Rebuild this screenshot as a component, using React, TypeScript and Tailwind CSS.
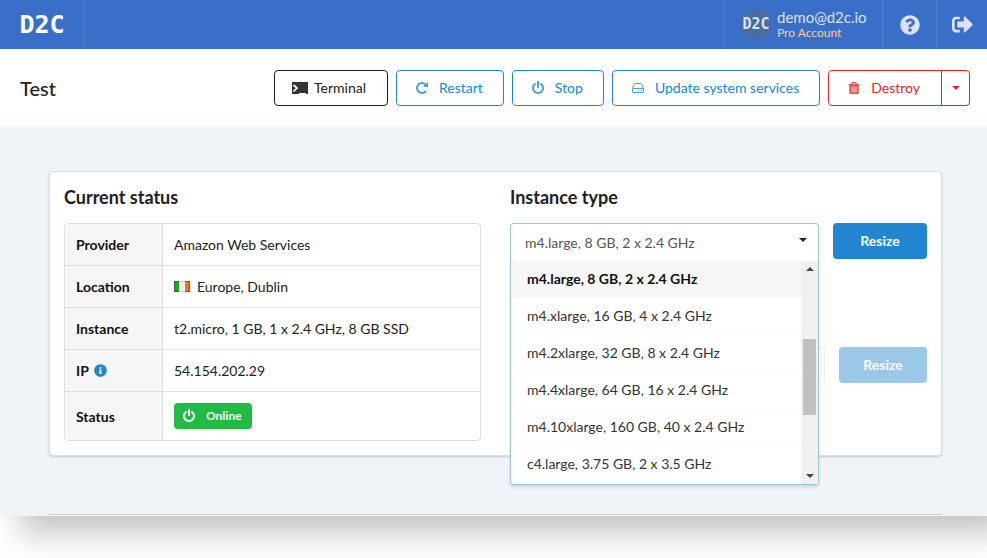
import { useState } from 'react';
import type { ReactNode } from 'react';
import { FaInfoCircle, FaQuestionCircle, FaSignOutAlt } from 'react-icons/fa';

const INSTANCE_TYPES = [
  'm4.large, 8 GB, 2 x 2.4 GHz',
  'm4.xlarge, 16 GB, 4 x 2.4 GHz',
  'm4.2xlarge, 32 GB, 8 x 2.4 GHz',
  'm4.4xlarge, 64 GB, 16 x 2.4 GHz',
  'm4.10xlarge, 160 GB, 40 x 2.4 GHz',
  'c4.large, 3.75 GB, 2 x 3.5 GHz',
];

function TerminalIcon() {
  return (
    <svg viewBox="0 0 16 12" className="h-3 w-4" aria-hidden="true">
      <path d="M0 0H16V12H14V11H7V12H0Z" fill="#333" />
      <path d="M1.5 3L5 6L1.5 9.500" fill="none" stroke="#fff" strokeWidth="1.7" />
    </svg>
  );
}

function RepeatIcon() {
  return (
    <svg viewBox="0 0 1792 1792" className="size-3.5" fill="currentColor" aria-hidden="true">
      <path d="M1664 256v448q0 26-19 45t-45 19h-448q-42 0-59-40-17-39 14-69l138-138q-148-137-349-137-104 0-198.500 40.500t-163.500 109.500-109.500 163.500-40.500 198.500 40.500 198.500 109.500 163.500 163.500 109.500 198.500 40.500q119 0 225-52t179-147q7-10 23-12 15 0 25 9l137 138q9 8 9.500 20.500t-7.500 22.500q-109 132-264 204.500t-327 72.500q-156 0-298-61t-245-164-164-245-61-298 61-298 164-245 245-164 298-61q147 0 284.500 55.500t244.500 156.500l130-129q29-31 70-14 39 17 39 59z" />
    </svg>
  );
}

function PowerIcon() {
  return (
    <svg viewBox="0 0 1792 1792" className="size-3.5" fill="currentColor" aria-hidden="true">
      <path d="M1664 896q0 156-61 298t-164 245-245 164-298 61-298-61-245-164-164-245-61-298q0-182 80.500-343t226.500-270q43-32 95.500-25t83.500 50q32 42 24.500 94.500t-49.500 84.500q-98 74-151.500 181t-53.500 228q0 104 40.500 198.500t109.500 163.500 163.500 109.500 198.500 40.500 198.500-40.500 163.500-109.500 109.500-163.500 40.500-198.500q0-121-53.500-228t-151.500-181q-42-32-49.500-84.500t24.500-94.500q31-43 84-50t95 25q146 109 226.500 270t80.500 343zm-640-768v640q0 52-38 90t-90 38-90-38-38-90v-640q0-52 38-90t90-38 90 38 38 90z" />
    </svg>
  );
}

function DriveIcon() {
  return (
    <svg viewBox="0 0 14 14" className="size-3.5" fill="none" stroke="currentColor" aria-hidden="true">
      <path d="M1.500 7.500L3.200 3.200Q3.500 2.500 4.200 2.500H9.800Q10.500 2.500 10.800 3.200L12.500 7.500V11Q12.500 11.500 12 11.500H2Q1.500 11.500 1.500 11Z M1.500 7.500H12.500" />
      <path d="M7.500 9.500H8.500M9.800 9.500H10.800" />
    </svg>
  );
}

function TrashIcon() {
  return (
    <svg viewBox="0 0 14 14" className="size-3.5" fill="none" stroke="currentColor" aria-hidden="true">
      <path d="M1.500 3.500H12.500M4.800 3.500L5.300 1.500H8.700L9.200 3.500" strokeWidth="1.200" />
      <path d="M2.300 4H11.700V12Q11.700 13 10.700 13H3.300Q2.300 13 2.300 12Z" fill="currentColor" stroke="none" />
      <path d="M5 5.500V11.500M7 5.500V11.500M9 5.500V11.500" stroke="#fff" strokeWidth="0.800" />
    </svg>
  );
}

function Caret({ up = false }: { up?: boolean }) {
  return (
    <svg viewBox="0 0 8 4" className="h-1 w-2" fill="currentColor" aria-hidden="true">
      <path d={up ? 'M0 4L4 0L8 4Z' : 'M0 0H8L4 4Z'} />
    </svg>
  );
}

function IrishFlag() {
  return (
    <svg viewBox="0 0 16 11" className="h-[11px] w-4" role="img" aria-label="Ireland">
      <rect width="16" height="11" fill="#efefef" />
      <rect width="5" height="11" fill="#2f9e2f" />
      <rect x="11" width="5" height="11" fill="#ff7316" />
      <path d="M0.500 0V10.500H5" fill="none" stroke="#12781a" />
      <path d="M0 0.500H5" stroke="#12781a" />
      <path d="M11 0.500H15.500V10.500H11" fill="none" stroke="#d43a08" />
      <path d="M5 0.500H11M5 10.500H11" stroke="#d4d4d4" />
    </svg>
  );
}

function ActionButton({ icon, children }: { icon: ReactNode; children: ReactNode }) {
  return (
    <button
      type="button"
      className="flex h-9 items-center rounded border border-[#2185d0] pr-5 pl-[18px] text-[#2185d0]"
    >
      <span className="mr-2.5 opacity-80">{icon}</span>
      {children}
    </button>
  );
}

function Row({ label, children }: { label: ReactNode; children: ReactNode }) {
  return (
    <tr>
      <th
        scope="row"
        className="w-[98px] border-r border-b border-[#dededf] bg-[#f6f6f6] px-[11px] py-2.5 text-left font-bold text-[#111]"
      >
        {label}
      </th>
      <td className="border-b border-[#e3e3e4] px-[11px] py-2.5">{children}</td>
    </tr>
  );
}

export default function App() {
  const [type, setType] = useState(INSTANCE_TYPES[0]);

  return (
    <div className="overflow-hidden bg-white pb-[42px] font-[Lato,sans-serif] text-sm text-[#212121]">
      <div className="shadow-[20px_18px_30px_rgba(0,0,0,0.23)]">
        <header className="flex h-[49px] items-stretch bg-[#3a6fc9] text-[#d9e3f5]">
          <a
            href="#home"
            className="flex w-[85px] items-center justify-center border-r border-[#4d7dce] font-['DejaVu_Sans_Mono',monospace] text-[25px] font-bold text-white"
          >
            D2C
          </a>
          <a href="#account" className="ml-auto flex w-[159px] items-center border-l border-[#4d7dce] pl-[17px]">
            <span className="flex size-[30px] items-center justify-center rounded-full bg-[#4b6c9e] font-['DejaVu_Sans_Mono',monospace] text-[15px] font-bold">
              D2C
            </span>
            <span className="ml-1.5">
              <span className="block text-[15px] leading-4">demo@d2c.io</span>
              <span className="block text-xs leading-4 text-[#fbcba0]">Pro Account</span>
            </span>
          </a>
          <a
            href="#help"
            aria-label="Help"
            className="flex w-[54px] items-center justify-center border-l border-[#4d7dce] text-xl"
          >
            <FaQuestionCircle />
          </a>
          <a
            href="#logout"
            aria-label="Sign out"
            className="flex w-[51px] items-center justify-center border-l border-[#4d7dce] text-[21px]"
          >
            <FaSignOutAlt />
          </a>
        </header>

        <div className="flex items-center gap-2 bg-white py-[21px] pr-[17px] pl-5">
          <h1 className="mr-auto text-xl font-medium">Test</h1>
          <button
            type="button"
            className="flex h-9 items-center gap-1.5 rounded border border-[#1b1c1d] pr-[21px] pl-[17px]"
          >
            <TerminalIcon />
            Terminal
          </button>
          <ActionButton icon={<RepeatIcon />}>Restart</ActionButton>
          <ActionButton icon={<PowerIcon />}>Stop</ActionButton>
          <ActionButton icon={<DriveIcon />}>Update system services</ActionButton>
          <div className="flex h-9 rounded border border-[#db2828] text-[#db2828]">
            <button type="button" className="flex items-center pr-[21px] pl-[18px]">
              <span className="mr-2.5 opacity-80">
                <TrashIcon />
              </span>
              Destroy
            </button>
            <button
              type="button"
              aria-label="More actions"
              className="flex w-7 items-center justify-center border-l border-[#db2828]"
            >
              <Caret />
            </button>
          </div>
        </div>

        <main className="bg-[#eff4f9] pt-11 pr-[45px] pb-px pl-[49px]">
          <section className="grid grid-cols-2 gap-[29px] rounded border border-[#dededf] bg-white p-3.5 shadow-[0_1px_2px_rgba(34,36,38,0.2)]">
            <div>
              <h2 className="mb-[15px] text-lg leading-[22px] font-bold">Current status</h2>
              <div className="overflow-hidden rounded border border-[#dededf]">
                <table className="-mb-px w-full border-separate border-spacing-0 leading-[21px]">
                  <tbody>
                    <Row label="Provider">Amazon Web Services</Row>
                    <Row label="Location">
                      <span className="flex items-center gap-[7px]">
                        <IrishFlag />
                        Europe, Dublin
                      </span>
                    </Row>
                    <Row label="Instance">t2.micro, 1 GB, 1 x 2.4 GHz, 8 GB SSD</Row>
                    <Row
                      label={
                        <span className="flex items-center gap-[5px]">
                          IP
                          <FaInfoCircle className="text-[13px] text-[#2185d0]" />
                        </span>
                      }
                    >
                      54.154.202.29
                    </Row>
                    <Row label="Status">
                      <span className="my-px inline-flex h-[26px] items-center gap-2.5 rounded bg-[#21ba45] pr-2.5 pl-2 align-top text-xs font-bold text-white">
                        <PowerIcon />
                        Online
                      </span>
                    </Row>
                  </tbody>
                </table>
              </div>
            </div>

            <div>
              <h2 className="mb-[15px] text-lg leading-[22px] font-bold">
                <label htmlFor="instance-type">Instance type</label>
              </h2>
              <div className="flex gap-3.5">
                <div className="relative h-[38px] flex-1">
                  <select
                    id="instance-type"
                    value={type}
                    onChange={(e) => setType(e.target.value)}
                    className="size-full appearance-none rounded-t border border-b-0 border-[#96c8da] bg-white pl-3.5 text-[#555]"
                  >
                    {INSTANCE_TYPES.map((t) => (
                      <option key={t}>{t}</option>
                    ))}
                  </select>
                  <span className="pointer-events-none absolute top-[15px] right-3 text-[#222]">
                    <Caret />
                  </span>
                  <div className="absolute inset-x-0 top-full z-10 flex rounded-b border border-t-0 border-[#96c8da] bg-white shadow-[0_2px_3px_rgba(34,36,38,0.15)]">
                    <ul role="listbox" aria-label="Instance types" className="flex-1 pb-px">
                      {INSTANCE_TYPES.map((t) => (
                        <li
                          key={t}
                          role="option"
                          aria-selected={t === type}
                          onClick={() => setType(t)}
                          className="flex h-[37px] items-center border-b border-[#fafafa] pl-4 text-[#333] last:border-transparent aria-selected:bg-[#f7f7f7] aria-selected:font-bold aria-selected:text-[#111]"
                        >
                          {t}
                        </li>
                      ))}
                    </ul>
                    <div className="flex w-[17px] flex-col items-center bg-[#f0f0f0] py-1.5 text-[#444]">
                      <Caret up />
                      <div className="mt-[68px] mb-auto h-[76px] w-[13px] bg-[#c1c1c1]" />
                      <Caret />
                    </div>
                  </div>
                </div>
                <button type="button" className="h-9 w-[94px] rounded bg-[#2185d0] font-bold text-white">
                  Resize
                </button>
              </div>
              <div className="mt-[86px] flex gap-3.5">
                <input
                  aria-label="Disk size"
                  disabled
                  className="h-[38px] min-w-0 flex-1 rounded border border-[#eeeeee] bg-white"
                />
                <button type="button" disabled className="h-9 w-[88px] rounded bg-[#9bc7e9] font-bold text-white">
                  Resize
                </button>
              </div>
            </div>
          </section>
          <hr className="mt-[58px] border-[#ccd1d6]" />
        </main>
      </div>
    </div>
  );
}
